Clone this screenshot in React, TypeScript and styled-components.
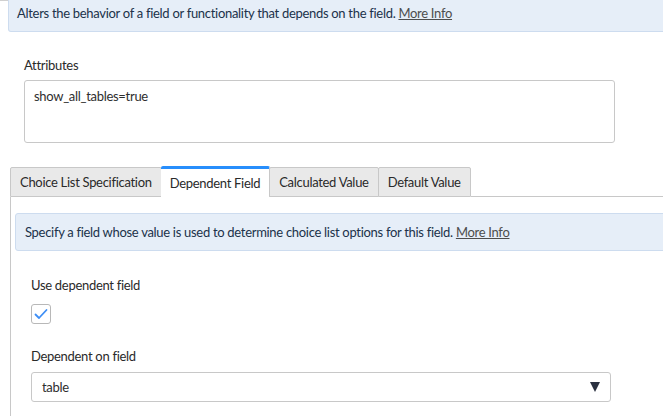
import styled, { createGlobalStyle } from "styled-components";

const GlobalStyle = createGlobalStyle`
  html, body {
    margin: 0;
    padding: 0;
    background: #fff;
    overflow: hidden;
  }
  body {
    font-family: Lato, "Liberation Sans", sans-serif;
    color: #2e2e2e;
    letter-spacing: -0.3px;
  }
`;

export default function App() {
  const tabs = [
    "Choice List Specification",
    "Dependent Field",
    "Calculated Value",
    "Default Value",
  ];
  const active = 1;

  return (
    <Page>
      <GlobalStyle />
      <TopRule />
      <InfoBox className="top">
        Alters the behavior of a field or functionality that depends on the
        field. <MoreInfo href="#">More Info</MoreInfo>
      </InfoBox>

      <Field className="attributes">
        <Label>Attributes</Label>
        <TextArea defaultValue="show_all_tables=true" />
      </Field>

      <TabBar>
        {tabs.map((t, i) => (
          <Tab key={t} $active={i === active}>
            {t}
          </Tab>
        ))}
        <TabFill />
      </TabBar>

      <Panel>
        <InfoBox className="inner">
          Specify a field whose value is used to determine choice list options
          for this field. <MoreInfo href="#">More Info</MoreInfo>
        </InfoBox>

        <Field className="check">
          <Label>Use dependent field</Label>
          <CheckBox>
            <svg width="14" height="12" viewBox="0 0 14 12">
              <path
                d="M1.5 6.5 L5 10 L12.5 2"
                fill="none"
                stroke="#3d8ef5"
                strokeWidth="1.8"
                strokeLinecap="round"
                strokeLinejoin="round"
              />
            </svg>
          </CheckBox>
        </Field>

        <Field className="select">
          <Label>Dependent on field</Label>
          <Select>
            <span>table</span>
            <Caret />
          </Select>
        </Field>
      </Panel>
    </Page>
  );
}

const Page = styled.div`
  width: 700px;
  display: flex;
  flex-direction: column;
  font-size: 13px;
`;

const TopRule = styled.div`
  height: 1px;
  background: #d0d0d0;
`;

const InfoBox = styled.div`
  box-sizing: border-box;
  background: #e6eef8;
  border: 1px solid #cddcef;
  border-radius: 3px;
  color: #20324a;
  font-size: 13px;
  display: flex;
  align-items: center;
  white-space: pre;

  &.top {
    margin-left: 8px;
    height: 32px;
    margin-top: -1px;
    border-top: none;
    border-radius: 0 0 3px 3px;
    padding: 0 0 6px 8px;
  }
  &.inner {
    margin: 16px 0 0 4px;
    height: 38px;
    padding: 0 0 0 9px;
  }
`;

const MoreInfo = styled.a`
  color: #4d4d4d;
  text-decoration: underline;
`;

const Field = styled.div`
  display: flex;
  flex-direction: column;

  &.attributes {
    padding: 24px 0 0 24px;
    width: 591px;
  }
  &.check {
    padding: 25px 0 0 20px;
  }
  &.select {
    padding: 23px 0 0 20px;
    width: 580px;
  }
`;

const Label = styled.label`
  font-size: 13px;
  color: #2a2a2a;
  line-height: 18px;
  margin-bottom: 6px;
`;

const TextArea = styled.textarea`
  box-sizing: border-box;
  width: 100%;
  height: 63px;
  border: 1px solid #c8c8c8;
  border-radius: 3px;
  padding: 7px 9px;
  font-family: Lato, "Liberation Sans", sans-serif;
  font-size: 13px;
  letter-spacing: -0.3px;
  color: #2e2e2e;
  resize: none;
  outline: none;
`;

const TabBar = styled.div`
  display: flex;
  align-items: flex-end;
  margin: 23px 0 0 10px;
`;

const Tab = styled.div<{ $active: boolean }>`
  box-sizing: border-box;
  height: ${(p) => (p.$active ? "31px" : "30px")};
  padding: 0 9px;
  display: flex;
  align-items: center;
  font-size: 13px;
  color: #2a2a2a;
  background: ${(p) => (p.$active ? "#fff" : "#e9e9e9")};
  border: 1px solid #c8c8c8;
  border-top: ${(p) => (p.$active ? "3px solid #278efc" : "1px solid #c8c8c8")};
  border-bottom: ${(p) => (p.$active ? "none" : "1px solid #c8c8c8")};
  border-left: ${(p) => (p.$active ? "none" : "1px solid #c8c8c8")};
  border-radius: 2px 2px 0 0;
  & + & {
    margin-left: -1px;
  }
`;

const TabFill = styled.div`
  flex: 1;
  border-bottom: 1px solid #c8c8c8;
`;

const Panel = styled.div`
  margin-left: 10px;
  border-left: 1px solid #c8c8c8;
  height: 230px;
  display: flex;
  flex-direction: column;
`;

const CheckBox = styled.div`
  box-sizing: border-box;
  width: 20px;
  height: 20px;
  margin-top: 4px;
  border: 1px solid #b8b8b8;
  border-radius: 3px;
  display: flex;
  align-items: center;
  justify-content: center;
`;

const Select = styled.div`
  box-sizing: border-box;
  height: 30px;
  margin-top: 1px;
  border: 1px solid #c8c8c8;
  border-radius: 3px;
  padding: 0 10px;
  display: flex;
  align-items: center;
  justify-content: space-between;
  font-size: 13px;
  color: #2e2e2e;
`;

const Caret = styled.span`
  width: 0;
  height: 0;
  border-left: 5px solid transparent;
  border-right: 5px solid transparent;
  border-top: 10px solid #2a3140;
`;
